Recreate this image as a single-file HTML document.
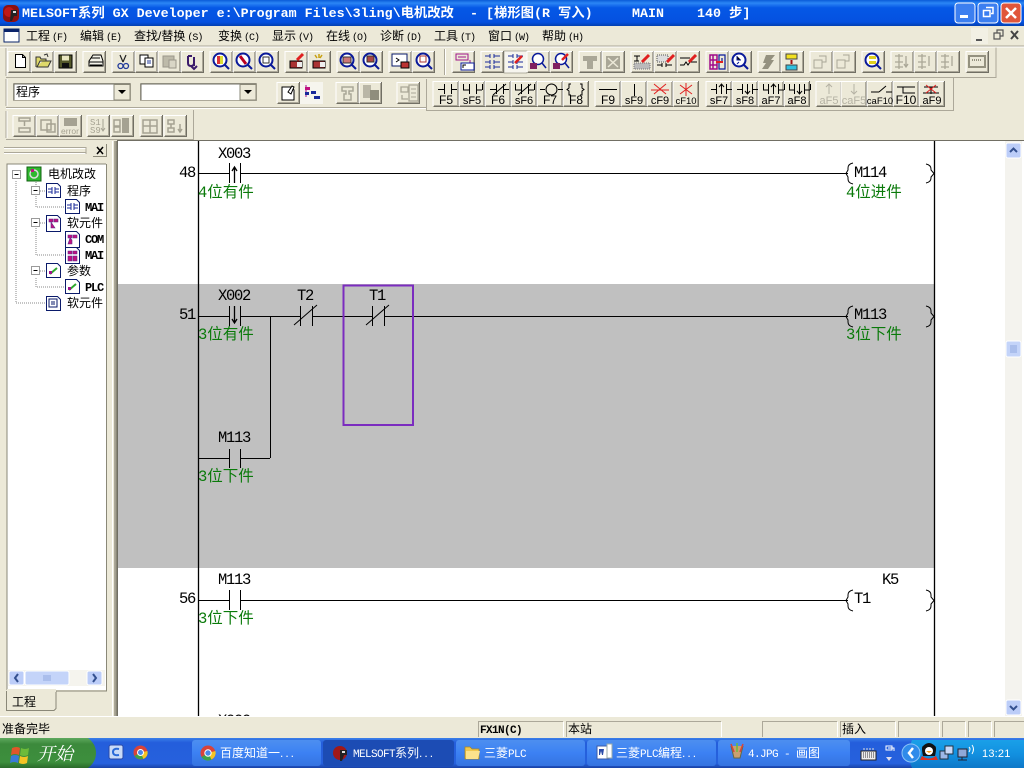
<!DOCTYPE html>
<html><head><meta charset="utf-8"><title>MELSOFT GX Developer</title>
<style>
html,body{margin:0;padding:0;background:#ECE9D8;overflow:hidden}
svg{display:block;position:absolute;left:0;top:0}
text{white-space:pre}
.m{font:12px "Liberation Sans","WenQuanYi Zen Hei","Noto Sans CJK SC",sans-serif;fill:#000}
.m tspan.h{font:10px "Liberation Mono",monospace;letter-spacing:-1px}
.t{font:bold 13.33px "Liberation Mono","Noto Sans CJK SC",monospace;fill:#fff}
.l{font:15.5px "Liberation Mono","Noto Serif CJK SC",monospace;letter-spacing:-1.3px;fill:#000}
.g{font:15.5px "Liberation Mono","WenQuanYi Zen Hei","Noto Sans CJK SC",monospace;fill:#0a7a0a}
.f{font:11px "Liberation Sans",sans-serif;fill:#000;text-anchor:middle}
.d{fill:#b5b2a4}
.w{font:12px "Liberation Sans","WenQuanYi Zen Hei","Noto Sans CJK SC",sans-serif;fill:#fff}
.w tspan.n{font:11px "Liberation Mono",monospace;letter-spacing:-.6px}
.w tspan.o{letter-spacing:2px}
.x{font:bold 12px "Liberation Mono",monospace;letter-spacing:-1.2px;fill:#000}
.s{font:bold 11px "Liberation Mono",monospace;letter-spacing:-.6px;fill:#000}
.k{stroke:#000;fill:none}
</style></head><body>
<svg width="1024" height="768" viewBox="0 0 1024 768" xmlns="http://www.w3.org/2000/svg">
<defs>
<linearGradient id="tb" x1="0" y1="0" x2="0" y2="1"><stop offset="0" stop-color="#0A5BD8"/><stop offset=".12" stop-color="#2B86F5"/><stop offset=".3" stop-color="#0558E6"/><stop offset=".85" stop-color="#0551E0"/><stop offset="1" stop-color="#0340B0"/></linearGradient>
<linearGradient id="task" x1="0" y1="0" x2="0" y2="1"><stop offset="0" stop-color="#3B7FE8"/><stop offset=".15" stop-color="#245EDC"/><stop offset=".85" stop-color="#2661DD"/><stop offset="1" stop-color="#1941A5"/></linearGradient>
<linearGradient id="start" x1="0" y1="0" x2="0" y2="1"><stop offset="0" stop-color="#5FA95F"/><stop offset=".2" stop-color="#3C8A3C"/><stop offset=".8" stop-color="#3D8F3D"/><stop offset="1" stop-color="#2A6A2A"/></linearGradient>
<linearGradient id="tray" x1="0" y1="0" x2="0" y2="1"><stop offset="0" stop-color="#1AA0E8"/><stop offset=".5" stop-color="#1290E0"/><stop offset="1" stop-color="#0E78C8"/></linearGradient>
<linearGradient id="tk" x1="0" y1="0" x2="0" y2="1"><stop offset="0" stop-color="#4D8FF0"/><stop offset=".5" stop-color="#3C81F3"/><stop offset="1" stop-color="#3573E0"/></linearGradient>
<g id="b"><rect width="23" height="22" fill="#ECE9D8"/><path d="M0 21V.5H22" fill="none" stroke="#fff"/><path d="M1 20.500H21.500V1" fill="none" stroke="#ACA899"/><path d="M.5 21.500H22.500V0" fill="none" stroke="#716F64"/></g>
<g id="fb"><rect width="26" height="26" fill="#ECE9D8"/><path d="M0 25V.5H25" fill="none" stroke="#fff"/><path d="M1 24.500H24.500V1" fill="none" stroke="#ACA899"/><path d="M.5 25.500H25.500V0" fill="none" stroke="#716F64"/></g>
</defs>

<!-- base -->
<rect width="1024" height="768" fill="#ECE9D8"/>

<!-- title bar -->
<rect width="1024" height="26" fill="url(#tb)"/>
<g transform="translate(2,4)"><rect x="1" y="1" width="16" height="17" rx="5" fill="#8c1010"/><circle cx="7" cy="8" r="5" fill="#c01818"/><path d="M9 6h6v6h-3l-2 5h-2z" fill="#222"/><path d="M11 7h3v2h-3z" fill="#ddd"/></g>
<text class="t" x="22" y="17">MELSOFT系列 GX Developer e:\Program Files\3ling\电机改改</text>
<text class="t" x="470" y="17">- [梯形图(R 写入)</text>
<text class="t" x="632" y="17">MAIN</text>
<text class="t" x="697" y="17">140 步]</text>
<g>
<rect x="955" y="3" width="20" height="20" rx="3" fill="#3C7FF0" stroke="#fff"/><rect x="960" y="15" width="8" height="3" fill="#fff"/>
<rect x="978" y="3" width="20" height="20" rx="3" fill="#3C7FF0" stroke="#fff"/><path d="M986 7.500h7v6h-2M983.500 10.500h6.500v6h-6.500z" fill="none" stroke="#fff" stroke-width="1.500"/>
<rect x="1001" y="3" width="20" height="20" rx="3" fill="#E0553A" stroke="#fff"/><path d="M1006 8l10 10M1016 8l-10 10" stroke="#fff" stroke-width="2.500"/>
</g>

<!-- menu bar -->
<rect x="4" y="29" width="15" height="13" fill="#fff" stroke="#0A246A"/><rect x="4" y="29" width="15" height="3" fill="#0A246A"/>
<g class="m">
<text x="26" y="40">工程<tspan class="h" dx="2">(F)</tspan></text>
<text x="80" y="40">编辑<tspan class="h" dx="2">(E)</tspan></text>
<text x="134" y="40">查找/替换<tspan class="h" dx="2">(S)</tspan></text>
<text x="218" y="40">变换<tspan class="h" dx="2">(C)</tspan></text>
<text x="272" y="40">显示<tspan class="h" dx="2">(V)</tspan></text>
<text x="326" y="40">在线<tspan class="h" dx="2">(O)</tspan></text>
<text x="380" y="40">诊断<tspan class="h" dx="2">(D)</tspan></text>
<text x="434" y="40">工具<tspan class="h" dx="2">(T)</tspan></text>
<text x="488" y="40">窗口<tspan class="h" dx="2">(W)</tspan></text>
<text x="542" y="40">帮助<tspan class="h" dx="2">(H)</tspan></text>
</g>
<rect x="971" y="28" width="17" height="16" fill="#F2F0E4"/><rect x="976" y="39" width="6" height="2" fill="#555"/>
<path d="M994 33h6v6h-6zM997 33v-3h6v6h-3" fill="none" stroke="#555" stroke-width="1.200"/>
<path d="M1011 31l7 8M1018 31l-7 8" stroke="#444" stroke-width="2"/>
<path d="M0 46H1024" stroke="#ACA899"/><path d="M0 47H1024" stroke="#fff"/>

<!-- toolbar dock outlines -->
<path d="M6 77.500H996V47.500" fill="none" stroke="#ACA899"/><path d="M426 107.500H6" fill="none" stroke="#ACA899"/>
<path d="M6 108.500H426" stroke="#fff"/>
<path d="M426.500 79V110.500H953.500V78" fill="none" stroke="#ACA899"/>
<path d="M6 139.500H193.500V110" fill="none" stroke="#ACA899"/>
<path d="M7 48V76M7 79V106M7 111V138" stroke="#fff"/><path d="M6 48V76M6 79V106M6 111V138" stroke="#ACA899"/>
<path d="M444.500 49V75" stroke="#ACA899"/><path d="M445.500 49V75" stroke="#fff"/>

<!-- row 1 buttons -->
<use href="#b" x="8" y="51"/><use href="#b" x="31" y="51"/><use href="#b" x="54" y="51"/>
<use href="#b" x="83" y="51"/>
<use href="#b" x="112" y="51"/><use href="#b" x="135" y="51"/><use href="#b" x="158" y="51"/><use href="#b" x="181" y="51"/>
<use href="#b" x="210" y="51"/><use href="#b" x="233" y="51"/><use href="#b" x="256" y="51"/>
<use href="#b" x="285" y="51"/><use href="#b" x="308" y="51"/>
<use href="#b" x="337" y="51"/><use href="#b" x="360" y="51"/>
<use href="#b" x="389" y="51"/><use href="#b" x="412" y="51"/>
<use href="#b" x="452" y="51"/>
<use href="#b" x="481" y="51"/><rect x="504" y="51" width="23" height="22" fill="#F6F5EE" stroke="#8a8878" stroke-width=".6"/>
<use href="#b" x="527" y="51"/><use href="#b" x="550" y="51"/>
<use href="#b" x="579" y="51"/><use href="#b" x="602" y="51"/>
<use href="#b" x="631" y="51"/><use href="#b" x="654" y="51"/><use href="#b" x="677" y="51"/>
<use href="#b" x="706" y="51"/><use href="#b" x="729" y="51"/>
<use href="#b" x="758" y="51"/><use href="#b" x="781" y="51"/>
<use href="#b" x="810" y="51"/><use href="#b" x="833" y="51"/>
<use href="#b" x="862" y="51"/>
<use href="#b" x="891" y="51"/><use href="#b" x="914" y="51"/><use href="#b" x="937" y="51"/>
<use href="#b" x="966" y="51"/>

<!-- row 1 icons -->
<path d="M15.500 54.500h7l3 3v10h-10z M22.500 54.500v3h3" fill="#fff" stroke="#000"/>
<path d="M36 67V57h4l1 2h5v2h-6l-3 6h11l3-6h-8" fill="#DFD96A" stroke="#333"/><path d="M44 55l3-1 1 3" fill="none" stroke="#333"/>
<rect x="59" y="55" width="13" height="13" fill="#54582a" stroke="#000"/><rect x="62" y="55.500" width="7" height="5" fill="#e9e6c0"/><rect x="62" y="63" width="7" height="5" fill="#111"/>
<path d="M89 61l4-6h8l2 6v5H89z" fill="#f4f3ea" stroke="#000"/><path d="M89 62h14M90 65h12M91 58h9" stroke="#000"/>
<path d="M120 55l3 7M126 55l-3 7" stroke="#222" stroke-width="1.200"/><circle cx="120.500" cy="66" r="2.500" fill="none" stroke="#223a9a" stroke-width="1.300"/><circle cx="126" cy="66" r="2.500" fill="none" stroke="#223a9a" stroke-width="1.300"/>
<rect x="140" y="55" width="8" height="9" fill="#fff" stroke="#000"/><rect x="145" y="58" width="8" height="9" fill="#fff" stroke="#000"/><path d="M147 61h4M147 63h4" stroke="#223a9a"/>
<rect x="163" y="56" width="11" height="11" fill="#bdbaa9" stroke="#9a978a"/><rect x="169" y="60" width="7" height="8" fill="#d9d6c6" stroke="#9a978a"/>
<path d="M188 56v7q0 3 3 3t3-3M188 56h4M194 57v9M191 66l3 3 3-3" fill="none" stroke="#3a1a6a" stroke-width="2"/>
<g fill="none" stroke="#0A1A9A" stroke-width="2"><circle cx="220" cy="60" r="6.500" fill="#fff"/><path d="M225 65l4 4"/><circle cx="243" cy="60" r="6.500" fill="#fff"/><path d="M248 65l4 4"/><circle cx="266" cy="60" r="6.500" fill="#fff"/><path d="M271 65l4 4"/></g>
<rect x="217" y="56" width="3" height="8" fill="#d33"/><rect x="220" y="56" width="3" height="8" fill="#dd3"/><path d="M240 56l6 8" stroke="#b02" stroke-width="3"/><path d="M263 57h6v6h-6z" fill="none" stroke="#333"/>
<rect x="290" y="61" width="12" height="7" fill="#a33" stroke="#000"/><rect x="297" y="62" width="5" height="5" fill="#eee"/><path d="M297 60l6-6" stroke="#e02020" stroke-width="3"/>
<rect x="313" y="61" width="12" height="7" fill="#a33" stroke="#000"/><rect x="320" y="62" width="5" height="5" fill="#eee"/><path d="M315 55l2 3M322 55l-2 3M319 54v4" stroke="#c8a010" stroke-width="1.500"/>
<g fill="none" stroke="#0A1A9A" stroke-width="2"><circle cx="347" cy="60" r="6.500" fill="#fff"/><path d="M352 65l4 4"/><circle cx="370" cy="60" r="6.500" fill="#fff"/><path d="M375 65l4 4"/></g>
<rect x="343" y="57" width="8" height="6" fill="#c77" stroke="#333"/><rect x="367" y="56" width="7" height="6" fill="#a44" stroke="#333"/>
<rect x="392" y="54" width="15" height="12" fill="#fff" stroke="#0A1A6A"/><path d="M396 58l3 2-3 2" stroke="#000" fill="none"/><rect x="401" y="62" width="8" height="6" fill="#b33" stroke="#000"/>
<circle cx="423" cy="60" r="6.500" fill="#fff" stroke="#0A1A9A" stroke-width="2"/><path d="M428 65l4 4" stroke="#0A1A9A" stroke-width="2"/><rect x="420" y="56" width="6" height="6" fill="none" stroke="#a33"/>
<path d="M456 54h12v6h-12zM470 60v4" fill="none" stroke="#a0158a"/><path d="M458 57h8" stroke="#a0158a"/><rect x="461" y="63" width="13" height="7" fill="#fff" stroke="#0A1A9A"/><path d="M463 68v-3h3" stroke="#000" fill="none"/>
<g stroke="#1A2A9A" fill="none"><path d="M485 56h5M494 56h6M485 62h5M494 62h6M485 67h5M494 67h6M490 54v4M494 54v4M490 60v4M494 60v4M490 65v4M494 65v4"/></g>
<g stroke="#1A2A9A" fill="none"><path d="M508 56h5M517 56h6M508 62h5M517 62h6M508 67h5M517 67h6M513 54v4M517 54v4M513 60v4M517 60v4M513 65v4M517 65v4"/></g><path d="M515 63l7-7" stroke="#e02020" stroke-width="2.500"/>
<circle cx="538" cy="59" r="5.500" fill="#fff" stroke="#0A1A9A" stroke-width="1.500"/><path d="M542 63l4 5" stroke="#0A1A9A" stroke-width="1.500"/><rect x="530" y="63" width="7" height="6" fill="#802060"/>
<circle cx="561" cy="59" r="5.500" fill="#fff" stroke="#0A1A9A" stroke-width="1.500"/><path d="M565 63l4 5" stroke="#0A1A9A" stroke-width="1.500"/><rect x="553" y="63" width="7" height="6" fill="#802060"/><path d="M562 60l6-6" stroke="#e02020" stroke-width="2.500"/>
<g fill="#aaa797"><path d="M583 56h14v5h-4v8h-6v-8h-4z"/><path d="M606 56h14v13h-14z"/></g><path d="M608 58l10 9M618 58l-10 9" stroke="#ECE9D8" stroke-width="1.500"/>
<path d="M634 56h6M637 56v5M634 61h5" stroke="#000"/><rect x="634" y="63" width="16" height="6" fill="#bbb" stroke="#777" stroke-dasharray="1 1"/><path d="M642 62l7-7" stroke="#e02020" stroke-width="3"/>
<rect x="657" y="55" width="11" height="7" fill="#ddd" stroke="#555" stroke-dasharray="1 1"/><path d="M657 65h5M662 63v4M666 63v4M666 65h6" stroke="#000"/><path d="M667 62l7-7" stroke="#e02020" stroke-width="3"/>
<path d="M680 58h10M680 65h4l2-3 2 3 2-3h7" stroke="#000" fill="none"/><path d="M689 62l7-7" stroke="#e02020" stroke-width="3"/>
<g fill="none" stroke="#A00A8A" stroke-width="1.500"><rect x="710" y="55" width="7" height="14"/><path d="M710 60h7M710 65h7M713 55v14"/></g><g fill="none" stroke="#0A1A9A" stroke-width="1.200"><path d="M719 55h6v14h-6zM722 58v4"/></g><path d="M716 62h7" stroke="#e02020" stroke-width="2"/>
<circle cx="739" cy="60" r="6.500" fill="#fff" stroke="#0A1A9A" stroke-width="2"/><path d="M744 65l4 4" stroke="#0A1A9A" stroke-width="2"/><path d="M737 56v4h4M737 64l2-2" stroke="#0A1A9A"/>
<path d="M766 55h9l-4 5h3l-6 9h-6l4-6h-3z" fill="#94917f"/>
<rect x="786" y="54" width="11" height="5" fill="#f2e020" stroke="#444"/><rect x="786" y="65" width="11" height="5" fill="#30c0e0" stroke="#444"/><path d="M791.500 60v4" stroke="#a01010" stroke-width="2"/>
<g fill="none" stroke="#aaa797"><path d="M814 60h8v8h-8zM819 56h7v6h-4"/><path d="M837 60h8v8h-8zM843 55h6v6h-4"/></g>
<circle cx="872" cy="60" r="6.500" fill="#fff" stroke="#0A1A9A" stroke-width="2"/><path d="M877 65l4 4" stroke="#0A1A9A" stroke-width="2"/><rect x="869" y="56" width="7" height="3" fill="#e0d020"/><rect x="869" y="61" width="7" height="3" fill="#e0d020"/>
<g stroke="#aaa797" fill="none" stroke-width="1.300"><path d="M895 56h8M895 62h8M895 67h8M899 54v15M906 56v10M904 64l2 3 2-3"/><path d="M918 56h8M918 62h8M918 67h8M922 54v15M929 56v10"/><path d="M941 56h8M941 62h8M941 67h8M945 54v15M952 56v10"/></g>
<rect x="969" y="56" width="16" height="11" fill="none" stroke="#94917f" stroke-width="2"/><path d="M972 60h10" stroke="#94917f" stroke-width="2" stroke-dasharray="1 1"/>

<!-- row 2: combos -->
<rect x="13.500" y="83.500" width="117" height="17" fill="#fff" stroke="#ACA899"/><path d="M14 84H130M14 84V100" stroke="#716F64"/>
<rect x="114" y="84.500" width="16" height="15.500" fill="#ECE9D8" stroke="#8a8878"/><path d="M118 90h8l-4 4z" fill="#000"/>
<text class="m" x="16" y="96">程序</text>
<rect x="140.500" y="83.500" width="116" height="17" fill="#fff" stroke="#ACA899"/><path d="M141 84H256M141 84V100" stroke="#716F64"/>
<rect x="240" y="84.500" width="16" height="15.500" fill="#ECE9D8" stroke="#8a8878"/><path d="M244 90h8l-4 4z" fill="#000"/>

<use href="#b" x="277" y="82"/><rect x="300" y="82" width="23" height="22" fill="#F6F5EE"/>
<path d="M282 87h9l3 3v10h-12z" fill="#fff" stroke="#000"/><path d="M288 92l4-6 2 1-3 7z" fill="#fff" stroke="#000"/>
<g fill="none" stroke="#A00A8A"><path d="M306 85v12"/></g><rect x="305" y="87" width="5" height="3" fill="#c01080"/><rect x="311" y="91" width="5" height="3" fill="#1A2A9A"/><rect x="314" y="96" width="6" height="3" fill="#1A2A9A"/><rect x="305" y="92" width="4" height="3" fill="#1A2A9A"/>
<use href="#b" x="336" y="82"/><use href="#b" x="359" y="82"/>
<path d="M342 87h11v4h-4v3h2v6h-7v-6h2v-3h-4z" fill="none" stroke="#aaa797" stroke-width="1.500"/>
<rect x="363" y="85" width="8" height="13" fill="#b9b6a6"/><rect x="370" y="90" width="9" height="10" fill="#8f8d7d"/>
<use href="#b" x="397" y="82"/>
<path d="M401 87h7v5h-7zM409 85h9v16h-9zM402 95v4h6" fill="none" stroke="#aaa797" stroke-width="1.300"/><path d="M411 89h5M411 93h5M411 97h5" stroke="#aaa797"/>

<!-- F-key buttons -->
<use href="#fb" x="433" y="81"/><use href="#fb" x="459" y="81"/><use href="#fb" x="485" y="81"/><use href="#fb" x="511" y="81"/><use href="#fb" x="537" y="81"/><use href="#fb" x="563" y="81"/>
<use href="#fb" x="595" y="81"/><use href="#fb" x="621" y="81"/><use href="#fb" x="647" y="81"/><use href="#fb" x="673" y="81"/>
<use href="#fb" x="706" y="81"/><use href="#fb" x="732" y="81"/><use href="#fb" x="758" y="81"/><use href="#fb" x="784" y="81"/>
<use href="#fb" x="816" y="81"/><use href="#fb" x="841" y="81"/><use href="#fb" x="867" y="81"/><use href="#fb" x="893" y="81"/><use href="#fb" x="919" y="81"/>
<g class="k" stroke-width="1">
<path d="M438 89.500h6M444.500 84v10M451.500 84v10M451 89.500h6"/>
<path d="M463.500 84v6h6M469.500 84v10M476.500 84v10M476 90h6M482.500 84v6"/>
<path d="M490 89.500h6M496.500 84v10M503.500 84v10M503 89.500h6M493 95l13-11"/>
<path d="M515.500 84v6h6M521.500 84v10M528.500 84v10M528 90h6M534.500 84v6M518 95l13-11"/>
<path d="M540 89.500h5M558 89.500h5"/><circle cx="551.500" cy="89.500" r="5.500"/>
<path d="M571 84h-2v4l-2 1.500 2 1.500v4h2M580 84h2v4l2 1.500-2 1.500v4h-2"/>
<path d="M599 89.500h18"/>
<path d="M634.500 84v12"/>
<path d="M711 89.500h5M716.500 84v10M726.500 84v10M726 89.500h6"/>
<path d="M737 89.500h5M742.500 84v10M752.500 84v10M752 89.500h6"/>
<path d="M763.500 84v6h5M768.500 84v10M778.500 84v10M778 90h6M784.500 84v6"/>
<path d="M789.500 84v6h5M794.500 84v10M804.500 84v10M804 90h6M810.500 84v6"/>
<path d="M871 92h8M879 92l7-6M886 92h6"/>
<path d="M897 87h18M903 87v6h12"/>
<path d="M924 87h14M931 87v7M923 93h16"/>
</g>
<path d="M651 90h18M654 84l12 10M666 84l-12 10" stroke="#e02020" fill="none"/>
<path d="M686 83v13M680 85l12 9M692 85l-12 9" stroke="#e02020" fill="none"/>
<path d="M926 85l10 8M936 85l-10 8" stroke="#e02020" fill="none"/>
<path d="M721.500 94v-9M719 87l2.500-3 2.500 3M747.500 84v9M745 91l2.500 3 2.500-3M773.500 94v-9M771 87l2.500-3 2.500 3M799.500 84v9M797 91l2.500 3 2.500-3" stroke="#000" fill="none"/>
<path d="M829 94v-10M826 87l3-3 3 3M854 84v10M851 91l3 3 3-3" stroke="#b5b2a4" fill="none"/>
<g class="f">
<text x="446" y="104" font-size="12">F5</text><text x="472" y="104">sF5</text><text x="498" y="104" font-size="12">F6</text><text x="524" y="104">sF6</text><text x="550" y="104" font-size="12">F7</text><text x="576" y="104" font-size="12">F8</text>
<text x="608" y="104" font-size="12">F9</text><text x="634" y="104">sF9</text><text x="660" y="104">cF9</text><text x="686" y="104" font-size="9.500">cF10</text>
<text x="719" y="104">sF7</text><text x="745" y="104">sF8</text><text x="771" y="104">aF7</text><text x="797" y="104">aF8</text>
<text x="829" y="104" class="f d">aF5</text><text x="854" y="104" class="f d">caF5</text><text x="880" y="104" font-size="9.500">caF10</text><text x="906" y="104" font-size="12">F10</text><text x="932" y="104">aF9</text>
</g>

<!-- row 3 -->
<use href="#b" x="13" y="115"/><use href="#b" x="36" y="115"/><use href="#b" x="59" y="115"/><use href="#b" x="87" y="115"/><use href="#b" x="111" y="115"/><use href="#b" x="140" y="115"/><use href="#b" x="164" y="115"/>
<g stroke="#a5a292" fill="none" stroke-width="1.500"><path d="M19 118h11v3h-11zM24.500 121v5M19 128h11v4h-11z"/><path d="M41 120h10v10h-10zM47 124h8v8h-8z"/><path d="M114 120h6v6h-6zM114 127h6v5h-6z"/><path d="M143 120h14v13h-14zM150 120v13M143 126h14"/><path d="M168 120h6v4h-6zM168 128h6v4h-6zM171 124v4M180 124v7M178 129l2 3 2-3"/></g>
<rect x="122" y="118" width="7" height="15" fill="#a5a292"/><rect x="64" y="118" width="13" height="8" fill="#a5a292"/>
<text x="61" y="134" font-family="Liberation Sans" font-size="8.500" fill="#a5a292">error</text>
<text x="90" y="125" font-family="Liberation Mono" font-size="9" fill="#a5a292">S1</text><text x="90" y="133" font-family="Liberation Mono" font-size="9" fill="#a5a292">S9</text>
<path d="M103 119v11M101 128l2 3 2-3" stroke="#a5a292" fill="none"/>

<!-- left panel -->
<rect x="4" y="141" width="102" height="575" fill="#ECE9D8"/>
<path d="M4 148.500H86M4 153.500H86" stroke="#fff"/><path d="M4 147.500H86M4 152.500H86" stroke="#ACA899"/><path d="M86 147v7" stroke="#ACA899"/>
<rect x="93" y="144" width="14" height="13" fill="#ECE9D8"/><path d="M93 156.500h13.500V144" stroke="#8a8878" fill="none"/><path d="M97 147l6 7M103 147l-6 7" stroke="#000" stroke-width="1.500"/>
<rect x="7" y="164" width="99" height="526" fill="#fff"/>
<path d="M7 690V164H106" fill="none" stroke="#8a8878"/><path d="M106.500 164V691H56" fill="none" stroke="#8a8878"/>
<path d="M112.500 141V716" stroke="#fff"/>
<rect x="114" y="141" width="2" height="575" fill="#ACA899"/>
<path d="M116.500 141V716" stroke="#8a8878" stroke-width="1.500"/>
<!-- tree -->
<g stroke="#888" stroke-dasharray="1 1" fill="none"><path d="M16 181V303H46M36 180V207H64M36 228V255H64M36 278V287H64M36 191H46M36 223H46M36 271H46M36 174H28"/></g>
<g fill="#fff" stroke="#9a9a9a"><rect x="12.500" y="170.500" width="8" height="8"/><rect x="31.500" y="186.500" width="8" height="8"/><rect x="31.500" y="218.500" width="8" height="8"/><rect x="31.500" y="266.500" width="8" height="8"/></g>
<path d="M14.500 174.500h4M33.500 190.500h4M33.500 222.500h4M33.500 270.500h4" stroke="#000"/>
<rect x="27" y="167" width="14" height="14" fill="#2FB82F" stroke="#106010"/><circle cx="34" cy="174" r="4" fill="none" stroke="#ddd" stroke-width="1.500"/><rect x="31" y="169" width="3" height="3" fill="#C01080"/>
<g fill="#fff" stroke="#0A1A6A"><path d="M46.500 183.500h11l3 3v11h-14z"/><path d="M65.500 199.500h11l3 3v11h-14z"/><path d="M46.500 215.500h11l3 3v13h-14z"/><path d="M65.500 231.500h11l3 3v13h-14z"/><path d="M65.500 247.500h11l3 3v13h-14z"/><path d="M46.500 263.500h11l3 3v11h-14z"/><path d="M65.500 279.500h11l3 3v11h-14z"/><path d="M46.500 296.500h11l3 3v11h-14z"/></g>
<path d="M48 189h4M48 192h4M52 187v7M55 187v7M55 189h4M55 192h4M67 205h4M67 208h4M71 203v7M74 203v7M74 205h4M74 208h4" stroke="#1A2A9A" fill="none"/>
<path d="M49 219h4v3h-4zM54 219h4v3h-4zM51 222l2 3 2 3h-4z M68 235h4v3h-4zM73 235h4v3h-4zM70 238l2 2v4h-4zM68 251h4v3h-4zM73 251h4v3h-4zM68 256h4v5h-4zM73 256h4v5h-4z" fill="#C01080" stroke="#5a2a8a" stroke-width=".6"/>
<path d="M50 274l7-6M69 290l7-6" stroke="#2FA82F" stroke-width="2"/><rect x="49" y="271" width="3" height="3" fill="#a0158a"/><rect x="68" y="287" width="3" height="3" fill="#a0158a"/>
<path d="M49 299h8v8h-8zM51 302h4M51 304h4" stroke="#0A1A6A" fill="none"/>
<g class="m">
<text x="48" y="178">电机改改</text><text x="67" y="195">程序</text><text x="67" y="227">软元件</text><text x="67" y="275">参数</text><text x="67" y="307">软元件</text>
</g>
<text class="x" x="85" y="211">MAI</text><text class="x" x="85" y="243">COM</text><text class="x" x="85" y="259">MAI</text><text class="x" x="85" y="291">PLC</text>
<!-- tree scrollbar -->
<rect x="8" y="670" width="97" height="16" fill="#F5F4EE"/>
<rect x="9" y="671" width="15" height="14" rx="2" fill="#BCCDF8" stroke="#fff"/><path d="M18 674l-3 4 3 4" fill="none" stroke="#34508F" stroke-width="2"/>
<rect x="25" y="671" width="44" height="14" rx="2" fill="#C4D4F9" stroke="#fff"/><path d="M44 675v6M46 675v6M48 675v6M50 675v6" stroke="#8FA8E0"/>
<rect x="87" y="671" width="15" height="14" rx="2" fill="#BCCDF8" stroke="#fff"/><path d="M93 674l3 4-3 4" fill="none" stroke="#34508F" stroke-width="2"/>
<!-- tab -->
<path d="M6.500 691V710.500H54l2-2V691" fill="#ECE9D8" stroke="#8a8878"/><rect x="7" y="689" width="49" height="3" fill="#ECE9D8"/>
<text class="m" x="12" y="706">工程</text>

<!-- ladder client -->
<path d="M117.500 141V716" stroke="#716F64"/><path d="M117 140.500H1024" stroke="#716F64"/>
<rect x="118" y="141" width="906" height="575" fill="#fff"/>
<rect x="118" y="284" width="816" height="284" fill="#C0C0C0"/>
<path d="M198.500 141V716M934.500 141V716" stroke="#000" stroke-width="1.300"/>
<!-- scrollbar -->
<rect x="1005" y="141" width="17" height="575" fill="#F4F3EE"/>
<rect x="1006" y="143" width="15" height="15" rx="2" fill="#BCCDF8" stroke="#fff"/><path d="M1010 152l3.500-3.500 3.500 3.500" fill="none" stroke="#34508F" stroke-width="2"/>
<rect x="1006" y="341" width="15" height="16" rx="2" fill="#C4D4F9" stroke="#fff"/><path d="M1010 346h7M1010 348h7M1010 350h7M1010 352h7" stroke="#8FA8E0"/>
<rect x="1006" y="700" width="15" height="15" rx="2" fill="#BCCDF8" stroke="#fff"/><path d="M1010 706l3.500 3.500 3.500-3.500" fill="none" stroke="#34508F" stroke-width="2"/>

<!-- rung 48 -->
<g class="k">
<path d="M198 173.500H229M240 173.500H848M229.500 163V183M240.500 163V183"/>
<path d="M234.500 183V168M232 171l2.500-4 2.500 4" stroke-width="1.300"/>
<path d="M853 163q-5 1-5 5v2l-2 3.500 2 3.500v2q0 4 5 5M926 164q5 1 5 5v1l3 3.500-3 3.500v1q0 4-5 5"/>
</g>
<!-- rung 51 -->
<g class="k">
<path d="M198 316.500H229M240 316.500H300M312 316.500H372M384 316.500H848M229.500 306V326M240.500 306V326M300.500 306V326M312.500 306V326M372.500 306V326M384.500 306V326"/>
<path d="M234.500 306V322M232 319l2.500 4 2.500-4" stroke-width="1.300"/>
<path d="M294 325l23-20M366 325l23-20"/>
<path d="M270.500 316V458M198 458.500H229M240 458.500H270M229.500 449V468M240.500 449V468"/>
<path d="M853 306q-5 1-5 5v2l-2 3.500 2 3.500v2q0 4 5 5M926 306q5 1 5 5v2l3 3.500-3 3.500v2q0 4-5 5"/>
</g>
<rect x="343.500" y="285.500" width="69.500" height="139.500" fill="none" stroke="#7B2CBF" stroke-width="2"/>
<!-- rung 56 -->
<g class="k">
<path d="M198 600.500H229M240 600.500H848M229.500 590V610M240.500 590V610"/>
<path d="M853 590q-5 1-5 5v2l-2 3.500 2 3.500v2q0 4 5 5M926 590q5 1 5 5v2l3 3.500-3 3.500v2q0 4-5 5"/>
</g>
<g class="l">
<text x="218" y="158">X003</text><text x="179" y="177">48</text><text x="854" y="177">M114</text>
<text x="218" y="300">X002</text><text x="297" y="300">T2</text><text x="369" y="300">T1</text><text x="179" y="319">51</text><text x="854" y="319">M113</text>
<text x="218" y="442">M113</text>
<text x="218" y="584">M113</text><text x="179" y="603">56</text><text x="854" y="603">T1</text><text x="882" y="584">K5</text>
<text x="218" y="725">X000</text>
</g>
<g class="g">
<text x="198" y="197">4位有件</text><text x="846" y="197">4位进件</text>
<text x="198" y="339">3位有件</text><text x="846" y="339">3位下件</text>
<text x="198" y="481">3位下件</text>
<text x="198" y="623">3位下件</text>
</g>

<!-- status bar -->
<rect x="0" y="716" width="1024" height="22" fill="#ECE9D8"/><path d="M0 716.500H1024" stroke="#fff"/>
<text class="m" x="2" y="733">准备完毕</text>
<g fill="none" stroke="#ACA899"><path d="M478.500 737V721.500H563M566.500 737V721.500H721M762.500 737V721.500H837M840.500 737V721.500H895M898.500 737V721.500H939M942.500 737V721.500H965M968.500 737V721.500H991M994.500 737V721.500H1024"/></g>
<g fill="none" stroke="#fff"><path d="M563.500 722V737M721.500 722V737M837.500 722V737M895.500 722V737M939.500 722V737M965.500 722V737M991.500 722V737"/></g>
<text class="s" x="480" y="733">FX1N(C)</text>
<text class="m" x="568" y="733">本站</text><text class="m" x="842" y="733">插入</text>

<!-- taskbar -->
<rect y="738" width="1024" height="30" fill="url(#task)"/>
<path d="M0 738H88q8 6 8 15t-8 15H0z" fill="url(#start)"/>
<g transform="translate(11,744)"><path d="M1 4q5-2 8 0l-1 7q-4-2-8 0z" fill="#E0562A"/><path d="M10 4q4 2 8 0l-1 7q-4 2-8 0z" fill="#6DBB3A"/><path d="M0 12q4-2 8 0l-1 7q-4-2-8 0z" fill="#3A7AD8"/><path d="M9 12q4 2 8 0l-1 7q-4 2-8 0z" fill="#F4C424"/></g>
<text x="37" y="760" font-family="Liberation Serif,Noto Serif CJK SC,serif" font-size="18" font-style="italic" fill="#fff">开始</text>
<g transform="translate(109,745)"><rect width="14" height="14" rx="2" fill="#C8DAF8" stroke="#2A4AA8"/><path d="M10 4q-6-1-6 3t6 3" fill="none" stroke="#2A6AD8" stroke-width="2"/></g>
<circle cx="140.500" cy="752.500" r="7" fill="#D8433A"/><path d="M140.500 752.500L134.500 756a7 7 0 0 0 10 2z" fill="#3FA24A"/><path d="M140.500 752.500L147.500 751a7 7 0 0 1-4 8z" fill="#F4C424"/><circle cx="140.500" cy="752.500" r="3" fill="#4A88E8" stroke="#fff"/>
<rect x="192" y="740" width="129" height="26" rx="3" fill="url(#tk)"/>
<rect x="323" y="740" width="131" height="26" rx="3" fill="#1C4CB4"/>
<rect x="456" y="740" width="129" height="26" rx="3" fill="url(#tk)"/>
<rect x="587" y="740" width="129" height="26" rx="3" fill="url(#tk)"/>
<rect x="718" y="740" width="132" height="26" rx="3" fill="url(#tk)"/>
<circle cx="208" cy="753" r="7.500" fill="#D8433A"/><path d="M208 753L201.500 757a7.500 7.500 0 0 0 11 2z" fill="#3FA24A"/><path d="M208 753L215.500 751a7.500 7.500 0 0 1-4 8.500z" fill="#F4C424"/><circle cx="208" cy="753" r="3.200" fill="#4A88E8" stroke="#fff"/>
<g transform="translate(333,745)"><circle cx="7" cy="8" r="7" fill="#A01818"/><path d="M7 5h7v5h-3l-2 6h-2z" fill="#222"/><rect x="9" y="6" width="3" height="2" fill="#ddd"/></g>
<path d="M465 747h5l2 2h7v10h-14z" fill="#F0C850" stroke="#B08818" stroke-width=".7"/><path d="M466 751h14l-2 8h-12z" fill="#FBE28C"/>
<rect x="597" y="746" width="12" height="13" fill="#fff" stroke="#3A5AA8"/><path d="M599 749h5l-1 6h-1l-1-4-1 4h-1z" fill="#2A4AA8"/><rect x="607" y="744" width="5" height="14" fill="#fff" stroke="#9aa"/>
<path d="M731 746l3 12h6l3-12" fill="#C8A070" stroke="#664"/><path d="M734 752l-3-8M740 752l3-8" stroke="#D8433A" stroke-width="1.500"/><path d="M737 752v-9" stroke="#6DBB3A" stroke-width="1.500"/>
<g class="w">
<text x="220" y="757">百度知道一<tspan class="o">...</tspan></text>
<text x="353" y="757"><tspan class="n">MELSOFT</tspan>系列<tspan class="o">...</tspan></text>
<text x="484" y="757">三菱<tspan class="n">PLC</tspan></text>
<text x="616" y="757">三菱<tspan class="n">PLC</tspan>编程<tspan class="o">...</tspan></text>
<text x="748" y="757"><tspan class="n">4.JPG - </tspan>画图</text>
</g>
<rect x="861" y="751" width="15" height="9" fill="#eee" stroke="#222"/><path d="M863 753h11M863 755h11M863 757h11" stroke="#333" stroke-dasharray="1 1"/><path d="M864 750v-2M867 750v-2M870 750v-2M873 750v-2" stroke="#ddd"/>
<path d="M886 746h6v4h-6zM888 748h6v3" fill="none" stroke="#fff"/><path d="M886 757h6l-3 4z" fill="#dde"/>
<path d="M912 740H1024V768H912q-6-14 0-28z" fill="url(#tray)"/>
<circle cx="911" cy="753" r="9" fill="#2F8BEA" stroke="#8CC4F8"/><path d="M913 748l-4 5 4 5" fill="none" stroke="#fff" stroke-width="2.500"/>
<g transform="translate(-6,0)"><path d="M929 756q-2-9 0-10 3-3 6-3t6 3q2 1 0 10z" fill="#111"/><circle cx="935" cy="751" r="4" fill="#fff"/><path d="M928 756q7 5 14 0l2 4h-18z" fill="#E03020"/><path d="M932 751l6 0-3 2z" fill="#F4A020"/></g>
<g transform="translate(-5,0)"><rect x="945" y="751" width="8" height="8" fill="#9DB8E8" stroke="#234"/><rect x="950" y="746" width="8" height="8" fill="#C8D8F8" stroke="#234"/></g>
<g transform="translate(-2,0)"><rect x="960" y="749" width="9" height="8" fill="#8FA8D8" stroke="#223"/><path d="M964 757v3M960 760h9" stroke="#223"/><path d="M971 747q2 2 0 5M974 745q3 4 0 9" stroke="#fff" fill="none"/></g>
<text x="982" y="757" style="font:11px 'Liberation Sans',sans-serif;letter-spacing:.2px;fill:#fff">13:21</text>
</svg>
</body></html>
